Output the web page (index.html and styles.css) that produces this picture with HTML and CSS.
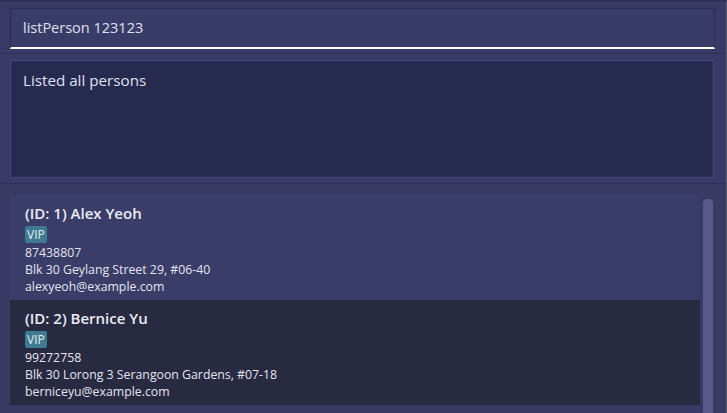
FILE: index.html
```html
<!DOCTYPE html>
<html>
<head>
<meta charset="utf-8">
<link rel="stylesheet" href="styles.css">
</head>
<body>
<div class="app">
  <div class="command-pane">
    <div class="command-box">listPerson 123123</div>
  </div>
  <div class="result-pane">
    <div class="result-box">Listed all persons</div>
  </div>
  <div class="list-pane">
    <div class="list">
      <div class="card card-odd">
        <div class="name">(ID: 1) Alex Yeoh</div>
        <div class="tags"><span class="tag">VIP</span></div>
        <div class="field">87438807</div>
        <div class="field">Blk 30 Geylang Street 29, #06-40</div>
        <div class="field">alexyeoh@example.com</div>
      </div>
      <div class="card card-even">
        <div class="name">(ID: 2) Bernice Yu</div>
        <div class="tags"><span class="tag">VIP</span></div>
        <div class="field">99272758</div>
        <div class="field">Blk 30 Lorong 3 Serangoon Gardens, #07-18</div>
        <div class="field">berniceyu@example.com</div>
      </div>
    </div>
    <div class="scrollbar"><div class="thumb"></div></div>
  </div>
</div>
</body>
</html>
```
FILE: styles.css
```css
html, body {
  margin: 0;
  padding: 0;
  height: 413px;
  overflow: hidden;
  background: #393b66;
  font-family: "Open Sans", "Noto Sans", sans-serif;
}
.app {
  height: 411px;
  display: flex;
  flex-direction: column;
  border-top: 2px solid #2f3157;
  border-right: 1px solid #5c5e72;
}
.command-pane {
  padding: 6px 11px 4px 10px;
  border-bottom: 1px solid #2e3057;
}
.command-box {
  box-sizing: border-box;
  height: 41px;
  border: 1px solid #2b2d54;
  border-bottom: 2px solid #ffffff;
  background: #3a3c68;
  color: #dfe0f0;
  font-size: 14.5px;
  line-height: 38px;
  padding-left: 12px;
}
.result-pane {
  padding: 6px 12px 5px 10px;
  border-bottom: 1px solid #2e3057;
}
.result-box {
  height: 118px;
  box-sizing: border-box;
  border: 1px solid #44467a;
  box-shadow: inset 0 0 0 1px #2c2f56;
  background: #272a4f;
  color: #dfe0f0;
  font-size: 15.2px;
  line-height: 20px;
  padding: 9px 12px;
}
.list-pane {
  flex: 1;
  display: flex;
  padding: 11px 13px 0 10px;
  gap: 3px;
  background: #383a64;
}
.list {
  flex: 1;
  display: flex;
  flex-direction: column;
}
.card {
  height: 105px;
  box-sizing: border-box;
  padding: 7px 15px 0 15px;
  color: #e4e4ee;
}
.card-odd { background: #3b3d69; }
.card-even { background: #282a42; }
.name {
  font-size: 15px;
  font-weight: 600;
  line-height: 22px;
  color: #ebebf3;
}
.tags {
  display: flex;
  margin-top: 2px;
  height: 18px;
}
.tag {
  background: #3e7a90;
  color: #e4edf2;
  font-size: 12px;
  line-height: 17px;
  height: 17px;
  padding: 0 2px;
  border-radius: 2px;
}
.field {
  font-size: 12.3px;
  line-height: 17px;
}
.scrollbar {
  width: 10px;
  padding-top: 4px;
}
.thumb {
  height: 100%;
  background: #575a8a;
  border-radius: 4px 4px 0 0;
}
```
